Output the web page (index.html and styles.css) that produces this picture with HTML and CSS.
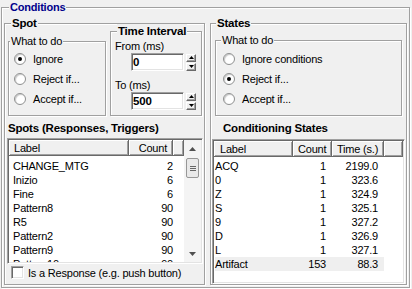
FILE: index.html
```html
<!DOCTYPE html>
<html>
<head>
  <title>Conditions</title>
  <link rel="stylesheet" href="styles.css">
</head>
<body>
  <div class="group conditions">
    <span class="group-title title-main">Conditions</span>

    <div class="group spot">
      <span class="group-title title-spot">Spot</span>

      <div class="spot-top">
        <div class="group todo todo-spot">
          <span class="group-title title-thin">What to do</span>
          <div class="radio"><span class="radio-circle checked"></span>Ignore</div>
          <div class="radio"><span class="radio-circle"></span>Reject if...</div>
          <div class="radio"><span class="radio-circle"></span>Accept if...</div>
        </div>

        <div class="group interval">
          <span class="group-title title-interval">Time Interval</span>
          <div class="field-label">From (ms)</div>
          <div class="spin-row">
            <div class="edit">0</div>
            <div class="spin">
              <span class="spin-btn"><svg width="5" height="3"><path d="M0 3 L2.5 0 L5 3Z" fill="#000"/></svg></span>
              <span class="spin-btn"><svg width="5" height="3"><path d="M0 0 L2.5 3 L5 0Z" fill="#000"/></svg></span>
            </div>
          </div>
          <div class="field-label second">To (ms)</div>
          <div class="spin-row">
            <div class="edit">500</div>
            <div class="spin">
              <span class="spin-btn"><svg width="5" height="3"><path d="M0 3 L2.5 0 L5 3Z" fill="#000"/></svg></span>
              <span class="spin-btn"><svg width="5" height="3"><path d="M0 0 L2.5 3 L5 0Z" fill="#000"/></svg></span>
            </div>
          </div>
        </div>
      </div>

      <div class="list-title">Spots (Responses, Triggers)</div>
      <div class="listview spots-list">
        <div class="list-main">
          <div class="list-header">
            <div class="hcol sp-label">Label</div>
            <div class="hcol sp-count num">Count</div>
            <div class="hcol hfill"></div>
          </div>
          <div class="list-rows">
            <div class="row"><span class="sp-label">CHANGE_MTG</span><span class="sp-count num">2</span></div>
            <div class="row"><span class="sp-label">Inizio</span><span class="sp-count num">6</span></div>
            <div class="row"><span class="sp-label">Fine</span><span class="sp-count num">6</span></div>
            <div class="row"><span class="sp-label">Pattern8</span><span class="sp-count num">90</span></div>
            <div class="row"><span class="sp-label">R5</span><span class="sp-count num">90</span></div>
            <div class="row"><span class="sp-label">Pattern2</span><span class="sp-count num">90</span></div>
            <div class="row"><span class="sp-label">Pattern9</span><span class="sp-count num">90</span></div>
            <div class="row"><span class="sp-label">Pattern10</span><span class="sp-count num">90</span></div>
          </div>
        </div>
        <div class="vscroll">
          <div class="scroll-btn"><svg width="7" height="4"><path d="M0 4 L3.5 0 L7 4Z" fill="#505050"/></svg></div>
          <div class="scroll-track">
            <div class="thumb"><i></i><i></i><i></i></div>
          </div>
          <div class="scroll-btn"><svg width="7" height="4"><path d="M0 0 L3.5 4 L7 0Z" fill="#505050"/></svg></div>
        </div>
      </div>

      <div class="checkbox-row"><span class="checkbox"></span>Is a Response (e.g. push button)</div>
    </div>

    <div class="group states">
      <span class="group-title title-states">States</span>

      <div class="group todo todo-states">
        <span class="group-title title-thin title-thin-states">What to do</span>
        <div class="radio"><span class="radio-circle"></span>Ignore conditions</div>
        <div class="radio"><span class="radio-circle checked"></span>Reject if...</div>
        <div class="radio"><span class="radio-circle"></span>Accept if...</div>
      </div>

      <div class="list-title states-title">Conditioning States</div>
      <div class="listview states-list">
        <div class="list-header">
          <div class="hcol st-label">Label</div>
          <div class="hcol st-count num">Count</div>
          <div class="hcol st-time num">Time (s.)</div>
          <div class="hcol hfill"></div>
        </div>
        <div class="list-rows">
          <div class="row st-row"><span class="st-label">ACQ</span><span class="st-count num">1</span><span class="st-time num">2199.0</span></div>
          <div class="row st-row"><span class="st-label">0</span><span class="st-count num">1</span><span class="st-time num">323.6</span></div>
          <div class="row st-row"><span class="st-label">Z</span><span class="st-count num">1</span><span class="st-time num">324.9</span></div>
          <div class="row st-row"><span class="st-label">S</span><span class="st-count num">1</span><span class="st-time num">325.1</span></div>
          <div class="row st-row"><span class="st-label">9</span><span class="st-count num">1</span><span class="st-time num">327.2</span></div>
          <div class="row st-row"><span class="st-label">D</span><span class="st-count num">1</span><span class="st-time num">326.9</span></div>
          <div class="row st-row"><span class="st-label">L</span><span class="st-count num">1</span><span class="st-time num">327.1</span></div>
          <div class="row st-row selected"><span class="st-label">Artifact</span><span class="st-count num">153</span><span class="st-time num">88.3</span></div>
        </div>
      </div>
    </div>
  </div>
</body>
</html>
```

FILE: styles.css
```css
body {
  margin: 0;
  width: 412px;
  height: 289px;
  overflow: hidden;
  background: #f0f0f0;
  font-family: "Liberation Sans", Arial, sans-serif;
  font-size: 11px;
  letter-spacing: -0.2px;
  color: #000;
}

/* etched group boxes */
.group {
  position: relative;
  box-sizing: border-box;
  border: 1px solid #a0a0a0;
  box-shadow: inset 1px 1px 0 #fff, 1px 1px 0 #fff;
}

.group-title {
  position: absolute;
  z-index: 1;
  top: -8px;
  left: 6px;
  padding: 0 1px;
  background: #f0f0f0;
  font-weight: bold;
  font-size: 11.5px;
  line-height: 14px;
  white-space: nowrap;
}

.title-main {
  left: 7px;
  font-size: 11px;
  color: #00008b;
}

.title-states {
  left: 5px;
}

.title-thin {
  left: 1px;
  font-weight: normal;
  font-size: 11px;
}

.title-thin-states {
  left: 5px;
}

.conditions {
  margin: 7px 0 0 1px;
  width: 409px;
  height: 281px;
  padding: 15px 2px 2px 2px;
  display: flex;
  gap: 5px;
}

.spot {
  width: 201px;
  height: 262px;
  padding: 7px 1px 0 3px;
}

.states {
  width: 197px;
  height: 262px;
  padding: 16px 0 0 4px;
}

.spot-top {
  display: flex;
  align-items: flex-end;
  gap: 4px;
}

/* radio groups */
.todo-spot {
  width: 98px;
  height: 75px;
  padding: 7px 0 0 5px;
}

.todo-states {
  width: 187px;
  height: 76px;
  padding: 8px 0 0 7px;
}

.radio {
  display: flex;
  align-items: center;
  height: 20px;
  white-space: nowrap;
}

.radio-circle {
  position: relative;
  box-sizing: border-box;
  width: 12px;
  height: 12px;
  margin-right: 7px;
  border-radius: 50%;
  border: 1px solid #8e8f8f;
  background: #fff;
  box-shadow: inset 1px 1px 1px #c8c8c8;
}

.radio-circle.checked::after {
  content: "";
  position: absolute;
  left: 3px;
  top: 3px;
  width: 4px;
  height: 4px;
  border-radius: 50%;
  background: #000;
}

/* time interval */
.interval {
  width: 92px;
  height: 85px;
  padding: 0 0 0 4px;
}

.field-label {
  margin-top: 8px;
  line-height: 13px;
}

.spin-row {
  display: flex;
  margin-left: 16px;
}

.edit {
  box-sizing: border-box;
  width: 53px;
  height: 18px;
  padding-left: 1px;
  border: 1px solid;
  border-color: #a0a0a0 #fff #fff #a0a0a0;
  box-shadow: inset 1px 1px 0 #696969, inset -1px -1px 0 #e3e3e3;
  background: #fff;
  font-weight: bold;
  font-size: 11.5px;
  line-height: 16px;
}

.spin {
  display: flex;
  flex-direction: column;
  justify-content: center;
  gap: 1px;
  margin-left: 2px;
}

.spin-btn {
  box-sizing: border-box;
  display: flex;
  align-items: center;
  justify-content: center;
  width: 10px;
  height: 8px;
  border: 1px solid;
  border-color: #fff #696969 #696969 #fff;
  box-shadow: inset -1px -1px 0 #a0a0a0;
  background: #f0f0f0;
}

/* list views */
.list-title {
  margin-top: 5px;
  font-weight: bold;
  font-size: 11.5px;
  line-height: 14px;
  white-space: nowrap;
}

.states-title {
  margin-left: 8px;
}

.listview {
  box-sizing: border-box;
  display: flex;
  border: 1px solid;
  border-color: #a0a0a0 #fff #fff #a0a0a0;
  box-shadow: inset 1px 1px 0 #696969, inset -1px -1px 0 #e3e3e3;
  background: #fff;
  overflow: hidden;
}

.spots-list {
  margin: 3px 0 0 -1px;
  width: 196px;
  height: 126px;
  padding: 1px;
}

.states-list {
  margin: 4px 0 0 -3px;
  width: 193px;
  height: 145px;
  padding: 1px;
  flex-direction: column;
}

.list-main {
  flex: 1;
  display: flex;
  flex-direction: column;
  min-width: 0;
  min-height: 0;
}

.list-header {
  display: flex;
  height: 16px;
  flex-shrink: 0;
}

.hcol {
  box-sizing: border-box;
  height: 16px;
  padding: 2px 5px 0;
  border-right: 1px solid #696969;
  border-bottom: 1px solid #696969;
  box-shadow: inset 1px 1px 0 #fff, inset -1px -1px 0 #a0a0a0;
  background: #f0f0f0;
  line-height: 13px;
  white-space: nowrap;
}

.hfill {
  flex: 1;
}

.num {
  text-align: right;
}

.list-rows {
  padding-top: 3px;
  min-height: 0;
  overflow: hidden;
}

.states-list .list-rows {
  padding-top: 2px;
}

.row {
  display: flex;
  flex-shrink: 0;
  height: 14px;
  line-height: 14px;
  white-space: nowrap;
}

.row > span {
  box-sizing: border-box;
}

.sp-label {
  width: 125px;
  padding-left: 4px;
}

.hcol.sp-label {
  padding-left: 5px;
}

.sp-count {
  width: 45px;
  padding-right: 6px;
}

.hcol.sp-count {
  padding-right: 5px;
}

.st-row {
  margin-left: 1px;
  width: 169px;
}

.st-label {
  width: 78px;
}

.hcol.st-label {
  width: 79px;
  padding-left: 6px;
}

.st-count {
  width: 39px;
  padding-right: 6px;
}

.st-time {
  width: 52px;
  padding-right: 6px;
}

.hcol.st-count,
.hcol.st-time {
  padding-right: 5px;
}

.selected {
  background: #efefef;
}

/* vertical scrollbar */
.vscroll {
  width: 17px;
  display: flex;
  flex-direction: column;
  background: #f4f4f4;
}

.scroll-btn {
  height: 17px;
  display: flex;
  align-items: center;
  justify-content: center;
}

.scroll-track {
  flex: 1;
  padding-top: 1px;
}

.thumb {
  box-sizing: border-box;
  height: 20px;
  margin: 0 2px;
  border: 1px solid #979797;
  border-radius: 2px;
  background: #e9e9e9;
  display: flex;
  flex-direction: column;
  align-items: center;
  justify-content: center;
  gap: 1px;
}

.thumb i {
  width: 6px;
  height: 1px;
  background: #666;
}

/* checkbox */
.checkbox-row {
  display: flex;
  align-items: center;
  height: 13px;
  margin-top: 2px;
  padding-left: 3px;
  white-space: nowrap;
}

.checkbox {
  box-sizing: border-box;
  width: 13px;
  height: 13px;
  margin-right: 4px;
  border: 1px solid;
  border-color: #a0a0a0 #fff #fff #a0a0a0;
  box-shadow: inset 1px 1px 0 #696969, inset -1px -1px 0 #e3e3e3;
  background: #fff;
}
```
